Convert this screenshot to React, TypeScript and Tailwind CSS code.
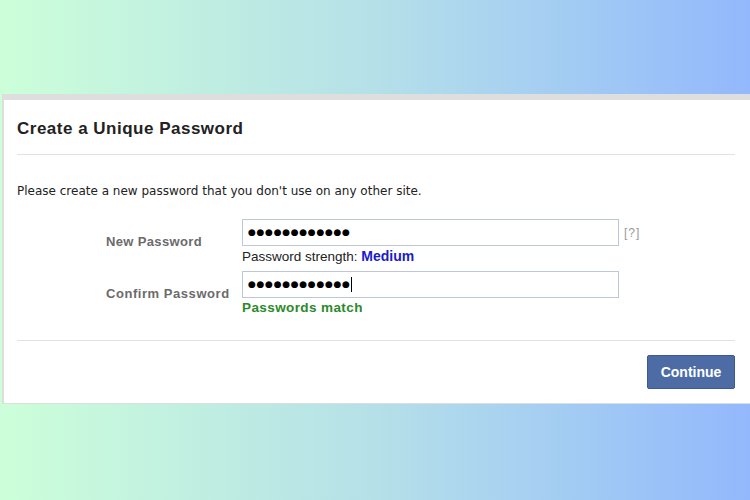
const Dots = () => (
  <span className="tracking-[0.7px] text-[9px] leading-none text-black font-['DejaVu_Sans',sans-serif]">
    {"●".repeat(12)}
  </span>
);

const App = () => {
  return (
    <div className="w-[750px] h-[500px] overflow-hidden bg-gradient-to-r from-[#ccffd9] via-[#b5e0e8] to-[#93b8fc] pt-[94px] pl-[2px] font-['Liberation_Sans',Arial,sans-serif]">
      <div className="w-[760px] bg-white border-t-[6px] border-l-[2px] border-b border-[#dedede] pl-[13px] pr-[15px]">
        <div className="h-[55px] pt-[16px] border-b border-[#e2e2e2] w-[718px]">
          <h1 className="text-[17px] font-bold text-[#222] tracking-[0.5px]">
            Create a Unique Password
          </h1>
        </div>

        <p className="mt-[29px] text-[12px] leading-[15px] text-[#222] font-['DejaVu_Sans',sans-serif]">
          Please create a new password that you don&apos;t use on any other site.
        </p>

        <div className="mt-[20px] flex flex-col gap-[6px]">
          <div className="flex items-start">
            <label className="w-[225px] pl-[89px] pt-[13px] text-[13px] font-bold text-[#6b6b6b] tracking-[0.35px]">
              New Password
            </label>
            <div className="flex flex-col">
              <div className="flex items-start gap-[5px]">
                <div className="w-[377px] h-[27px] border border-[#bdc7d8] flex items-center pl-[5px]">
                  <Dots />
                </div>
                <span className="pt-[5px] text-[12px] text-[#999] tracking-[1px]">[?]</span>
              </div>
              <p className="mt-[2px] text-[13.5px] leading-[16px] text-[#222]">
                Password strength: <span className="font-bold text-[#1a1acc] text-[14px]">Medium</span>
              </p>
            </div>
          </div>

          <div className="flex items-start">
            <label className="w-[225px] pl-[89px] pt-[13px] text-[13px] font-bold text-[#6b6b6b] tracking-[0.55px]">
              Confirm Password
            </label>
            <div className="flex flex-col">
              <div className="w-[377px] h-[27px] border border-[#bdc7d8] flex items-center pl-[5px]">
                <Dots />
                <span className="w-px h-[15px] bg-black" />
              </div>
              <p className="mt-[2px] text-[13.5px] leading-[16px] font-bold text-[#2a8a2a] tracking-[0.4px]">
                Passwords match
              </p>
            </div>
          </div>
        </div>

        <div className="mt-[24px] border-t border-[#e2e2e2] w-[718px] pt-[14px] pb-[14px] flex justify-end">
          <button className="w-[88px] h-[34px] bg-[#4d6ca6] border border-[#3b5998] rounded-[2px] text-white text-[14px] font-bold">
            Continue
          </button>
        </div>
      </div>
    </div>
  );
};

export default App;
